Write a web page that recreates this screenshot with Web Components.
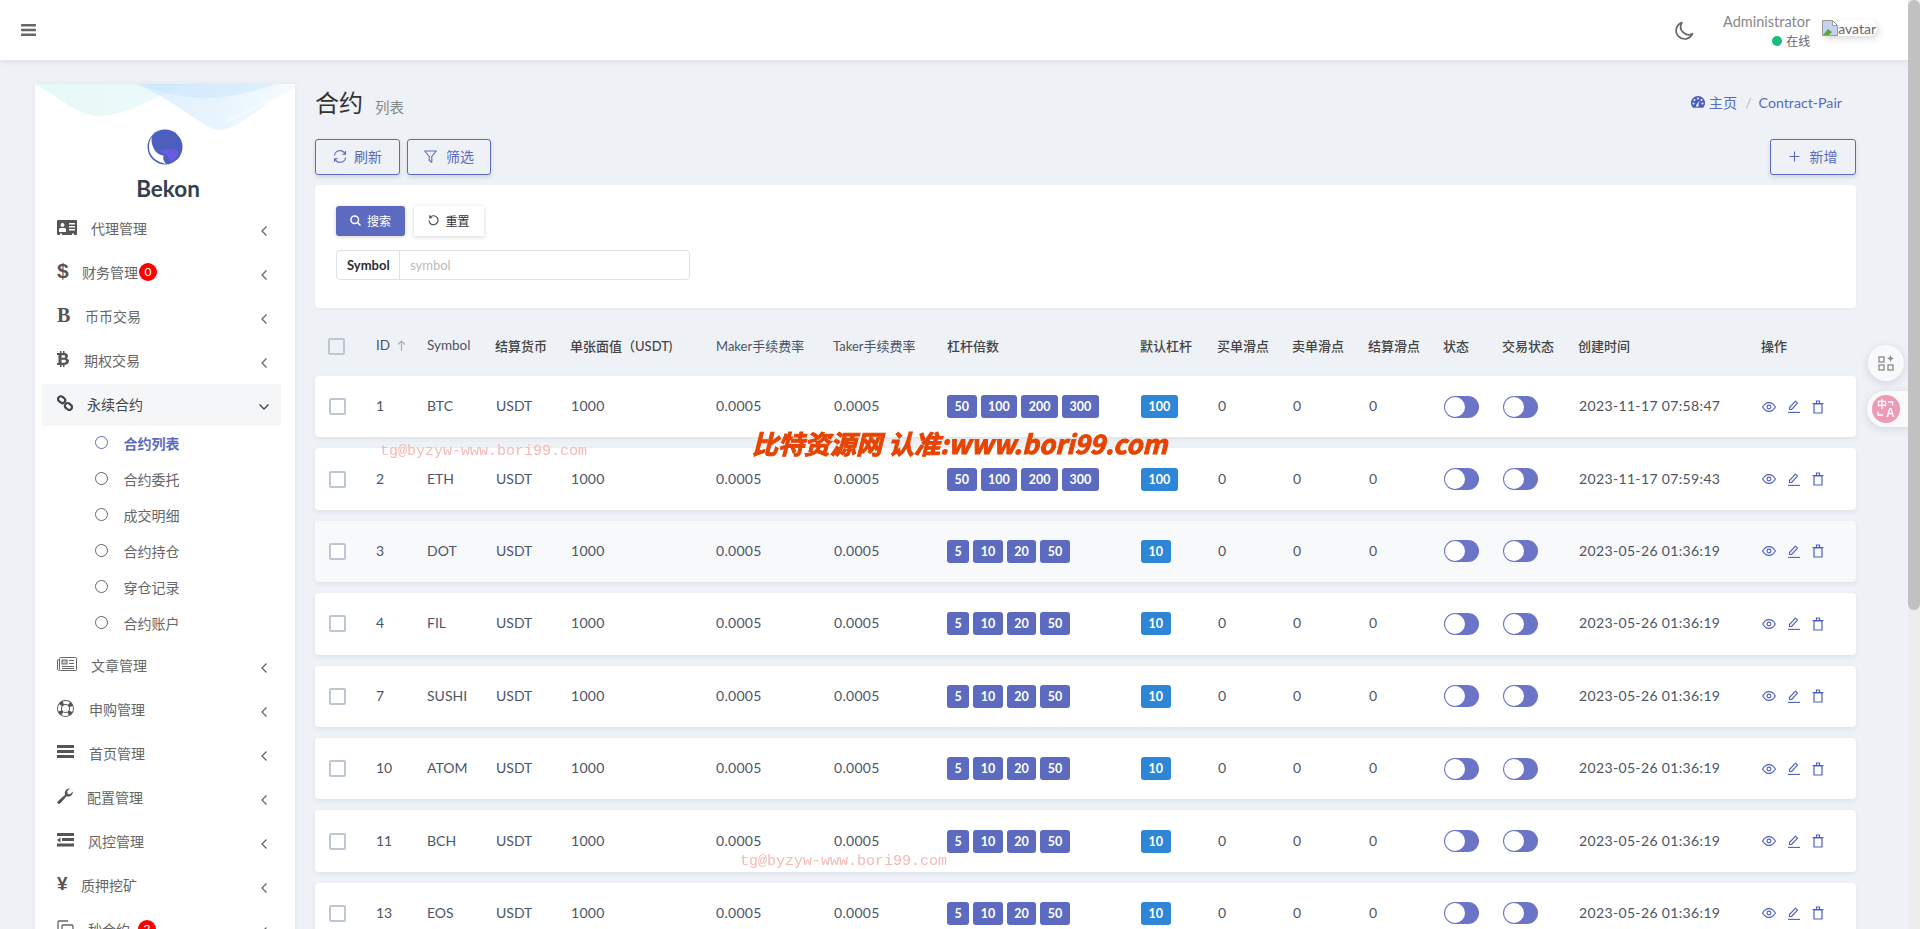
<!DOCTYPE html>
<html lang="zh">
<head>
<meta charset="utf-8">
<title>Contract-Pair</title>
<style>
  html, body {
    margin: 0;
    height: 929px;
    overflow: hidden;
    background: #eef1f6;
    font-family: "Lato", "Noto Sans CJK SC", sans-serif;
    font-size: 14px;
    color: #4c5566;
  }
  .main {
    display: flex;
    align-items: flex-start;
    padding-left: 35px;
    gap: 20px;
    height: 869px;
    overflow: hidden;
  }
  .content {
    width: 1541px;
    flex: none;
  }
  svg { display: block; }
</style>
</head>
<body>
<top-bar></top-bar>

<div class="main">
  <side-nav>
    <nav-item start="91"><svg slot="icon" width="20" height="15" viewBox="0 0 20 15"><path fill="#555" fill-rule="evenodd" d="M1 0h18a1 1 0 0 1 1 1v13a1 1 0 0 1-1 1h-2v-1.500h-2V15H5v-1.500H3V15H1a1 1 0 0 1-1-1V1a1 1 0 0 1 1-1zM5.500 3a2 2 0 1 0 0 4 2 2 0 0 0 0-4zM2 12h7V9.500C9 8.300 8 8 7 8H4C3 8 2 8.300 2 9.500zM12 3v1.500h6V3zm0 3v1.500h6V6zm0 3v1.500h6V9z"/></svg>代理管理</nav-item>
    <nav-item start="82" badge="0"><span slot="icon" class="g" style="font:bold 21px 'Liberation Sans',sans-serif;color:#555">$</span>财务管理</nav-item>
    <nav-item start="85"><span slot="icon" style="font:bold 20px 'Liberation Serif',serif;color:#555">B</span>币币交易</nav-item>
    <nav-item start="84"><svg slot="icon" width="12" height="16" viewBox="0 0 12 16"><path fill="#555" fill-rule="evenodd" d="M3 0h1.500v2H6V0h1.500v2.100C9.600 2.400 11 3.300 11 5c0 1.100-.6 1.900-1.500 2.300C11 7.700 12 8.700 12 10.300c0 2-1.700 3.300-4.500 3.600V16H6v-2H4.500v2H3v-2H0v-2h1.500V4H0V2h3zm1.500 4.300v2.500h2c1 0 1.700-.5 1.700-1.300s-.7-1.200-1.700-1.200zm0 4.400v3h2.500c1.200 0 2-.6 2-1.500s-.8-1.500-2-1.500z"/></svg>期权交易</nav-item>
    <nav-item start="87" active open><svg slot="icon" width="16" height="16" viewBox="0 0 16 16" fill="none" stroke="#444" stroke-width="2.200"><rect x=".9" y="1.900" width="7.500" height="5.500" rx="2.700" transform="rotate(40 4.600 4.600)"/><rect x="7.700" y="8.700" width="7.500" height="5.500" rx="2.700" transform="rotate(40 11.400 11.400)"/></svg>永续合约</nav-item>
    <nav-sub active style="margin-top:-2.500px">合约列表</nav-sub>
    <nav-sub>合约委托</nav-sub>
    <nav-sub>成交明细</nav-sub>
    <nav-sub>合约持仓</nav-sub>
    <nav-sub>穿仓记录</nav-sub>
    <nav-sub style="margin-bottom:3.700px">合约账户</nav-sub>
    <nav-item start="91"><svg slot="icon" width="20" height="14" viewBox="0 0 20 14" fill="none" stroke="#666"><rect x="2.500" y=".5" width="17" height="13" rx="1"/><path d="M2.500 3H1a.5.5 0 0 0-.5.5V12c0 1 1 1.500 2 1.500"/><rect x="5" y="3" width="5" height="4" fill="#666" fill-opacity=".35"/><path d="M12 3.500h5M12 6.500h5M5 9.500h12M5 11.500h12"/></svg>文章管理</nav-item>
    <nav-item start="89"><svg slot="icon" width="17" height="17" viewBox="0 0 17 17" fill="none" stroke="#555"><circle cx="8.500" cy="8.500" r="6" stroke-width="5" stroke="#555"/><circle cx="8.500" cy="8.500" r="6" stroke-width="3" stroke="#fff" stroke-dasharray="6 3.420" stroke-dashoffset="3"/></svg>申购管理</nav-item>
    <nav-item start="89"><svg slot="icon" width="17" height="14" viewBox="0 0 17 14" fill="#555"><rect width="17" height="3"/><rect y="5" width="17" height="3"/><rect y="10" width="17" height="3"/></svg>首页管理</nav-item>
    <nav-item start="87"><svg slot="icon" width="16" height="16" viewBox="0 0 16 16"><path fill="#555" d="M15.800 3.600c.2 2.500-1.800 5-4.500 5-.6 0-1.200-.1-1.700-.3l-6.200 6.900c-.8.900-2 .9-2.600.3s-.6-1.800.3-2.600l7-6.200c-.2-.5-.3-1-.3-1.600 0-2.700 2.500-4.800 5-4.500l-2.700 2.700.6 2.400 2.300.6z"/></svg>配置管理</nav-item>
    <nav-item start="88"><svg slot="icon" width="17" height="14" viewBox="0 0 17 14" fill="#555"><rect width="17" height="3"/><path d="M0 7l3.500-2.500v5z"/><rect x="5" y="5" width="12" height="3"/><rect y="10.500" width="17" height="3"/></svg>风控管理</nav-item>
    <nav-item start="81"><span slot="icon" style="font:bold 19px 'Liberation Sans',sans-serif;color:#555">¥</span>质押挖矿</nav-item>
    <nav-item start="88" badge="2"><svg slot="icon" width="17" height="17" viewBox="0 0 17 17" fill="none" stroke="#666" stroke-width="1.300"><path d="M11 1H2a1 1 0 0 0-1 1v11h4"/><rect x="5" y="5" width="11" height="11" rx="1"/></svg>秒合约</nav-item>
  </side-nav>

  <div class="content">
    <page-head></page-head>
    <search-panel></search-panel>
    <contract-table>
      <contract-row rid="1" symbol="BTC" levers="50,100,200,300" lever="100" created="2023-11-17 07:58:47"></contract-row>
      <contract-row rid="2" symbol="ETH" levers="50,100,200,300" lever="100" created="2023-11-17 07:59:43"></contract-row>
      <contract-row rid="3" symbol="DOT" levers="5,10,20,50" lever="10" created="2023-05-26 01:36:19" hover></contract-row>
      <contract-row rid="4" symbol="FIL" levers="5,10,20,50" lever="10" created="2023-05-26 01:36:19"></contract-row>
      <contract-row rid="7" symbol="SUSHI" levers="5,10,20,50" lever="10" created="2023-05-26 01:36:19"></contract-row>
      <contract-row rid="10" symbol="ATOM" levers="5,10,20,50" lever="10" created="2023-05-26 01:36:19"></contract-row>
      <contract-row rid="11" symbol="BCH" levers="5,10,20,50" lever="10" created="2023-05-26 01:36:19"></contract-row>
      <contract-row rid="13" symbol="EOS" levers="5,10,20,50" lever="10" created="2023-05-26 01:36:19"></contract-row>
    </contract-table>
  </div>
</div>

<float-tools></float-tools>
<water-marks></water-marks>
<fake-scrollbar></fake-scrollbar>

<script>
  // small helper, every element here is the same shape: styles + markup in an open root
  function define(name, html, extra) {
    const template = document.createElement("template");
    template.innerHTML = html;
    class El extends HTMLElement {
      constructor() {
        super();
        this.attachShadow({ mode: "open" });
        this.shadowRoot.appendChild(template.content.cloneNode(true));
      }
      connectedCallback() {
        if (extra) extra.call(this, this.shadowRoot);
      }
    }
    customElements.define(name, El);
  }

  define("top-bar", `
    <style>
      :host {
        display: flex;
        align-items: center;
        height: 60px;
        background: #fff;
        box-shadow: 0 1px 6px rgba(60, 70, 90, .12);
        position: relative;
        z-index: 2;
        padding: 0 43px 0 21px;
      }
      .menu { margin-right: auto; }
      .moon { margin-right: 29px; margin-top: 2px; }
      .who {
        text-align: right;
        color: #888;
        font-size: 14.500px;
        line-height: 17px;
        margin-right: 12px;
        padding-top: 2px;
      }
      .who div { white-space: nowrap; }
      .who .on {
        display: flex;
        justify-content: flex-end;
        align-items: center;
        gap: 4px;
        font-size: 12px;
        color: #666;
        margin-top: 3px;
      }
      .dot { width: 10px; height: 10px; border-radius: 50%; background: #19bd7a; }
      .avatar {
        display: flex;
        align-items: center;
        height: 16px;
        color: #666;
        font-size: 14px;
        background: #fff;
        border-radius: 0 8px 8px 0;
        box-shadow: 2px 3px 6px rgba(0, 0, 0, .14);
        margin-top: -4px;
        padding-right: 1px;
      }
    </style>
    <svg class="menu" width="15" height="12" viewBox="0 0 15 12" fill="#666"><rect width="15" height="2.400" rx=".6"/><rect y="4.800" width="15" height="2.400" rx=".6"/><rect y="9.600" width="15" height="2.400" rx=".6"/></svg>
    <svg class="moon" width="20" height="20" viewBox="0 0 19 19" fill="none" stroke="#666" stroke-width="1.600" stroke-linejoin="round"><path d="M7.500 1.500a8 8 0 1 0 10 10.500A7.500 7.500 0 0 1 7.500 1.500z"/></svg>
    <div class="who">
      <div>Administrator</div>
      <div class="on"><span class="dot"></span>在线</div>
    </div>
    <div class="avatar">
      <svg width="16" height="16" viewBox="0 0 16 16"><path fill="#c5d3ee" stroke="#999" d="M.5.500h10l5 5v10H.5z"/><path fill="#fff" stroke="#999" d="M10.500.500v5h5z"/><path fill="#5aa63c" d="M1 15l5-6 4 3-3 3z"/></svg>avatar
    </div>
  `);

  define("side-nav", `
    <style>
      :host {
        display: block;
        flex: none;
        width: 260px;
        height: 860px;
        margin-top: 24px;
        background: #fff;
        position: relative;
        box-shadow: 0 0 6px rgba(60, 70, 90, .06);
      }
      .wave { position: absolute; left: 0; top: 0; }
      .brand {
        display: flex;
        flex-direction: column;
        align-items: center;
        padding-top: 45px;
        height: 123px;
        box-sizing: border-box;
      }
      .name {
        font: 700 22.500px/26px "Lato", sans-serif;
        color: #333f4f;
        margin: 11px 0 0 6px;
      }
      .items { display: flex; flex-direction: column; padding: 0 14px 0 7px; }
    </style>
    <svg class="wave" width="260" height="47" viewBox="0 0 260 47">
      <defs>
        <linearGradient id="w1" x1="0" x2="1"><stop offset="0" stop-color="#e6f9f5"/><stop offset="1" stop-color="#edf9fc"/></linearGradient>
        <linearGradient id="w2" x1="0" x2="1"><stop offset="0" stop-color="#c9e5fb"/><stop offset=".6" stop-color="#dceffd"/><stop offset="1" stop-color="#f0f9fe"/></linearGradient>
      </defs>
      <path fill="url(#w1)" d="M0 0C25 14 45 32 62 32 90 32 115 16 150 0z"/>
      <path fill="url(#w2)" opacity=".6" d="M100 0C135 12 170 46 184 46 205 46 235 12 260 5V0z"/>
      <path fill="#bfe0fa" opacity=".4" d="M105 0C130 10 160 16 180 14S225 6 240 0z"/>
      <path fill="none" stroke="#fff" stroke-width="1" d="M190 38C210 30 230 16 250 12"/>
    </svg>
    <div class="brand">
      <svg width="36" height="36" viewBox="0 0 36 36">
        <defs><clipPath id="logo"><circle cx="18" cy="18" r="17.500"/></clipPath></defs>
        <circle cx="18" cy="18" r="17.500" fill="#4c5fbf"/>
        <g clip-path="url(#logo)">
          <path fill="#6a5ce0" d="M13 22.500C18 19 26 19 31 22 31 27 28 31 24 33 23 29 19 25 13 22.500z"/>
          <path fill="#fff" d="M4.700 7.700C1 14 1 22 5 27 8 31 12 33 19 35 17 32 15 29 17 27 13 26 9 24 7 20 5 16 4 12 4.700 7.700z"/>
        </g>
      </svg>
      <div class="name">Bekon</div>
    </div>
    <div class="items"><slot></slot></div>
  `);

  define("nav-item", `
    <style>
      :host {
        display: flex;
        align-items: center;
        height: 44px;
        position: relative;
        box-sizing: border-box;
        color: #666;
        font-size: 14px;
      }
      :host([active]) {
        height: 42px;
        margin: 1px 0;
        background: #f5f6f8;
        color: #444;
        border-radius: 2px;
      }
      .icon {
        flex: none;
        display: flex;
        align-items: center;
        height: 20px;
        margin-left: 15px;
        margin-top: -4px;
      }
      .label { white-space: nowrap; margin-top: -2px; }
      .badge {
        width: 18px;
        height: 18px;
        border-radius: 50%;
        background: #f00;
        color: #fff;
        font-size: 12px;
        line-height: 18px;
        text-align: center;
        margin-left: 1px;
        margin-top: -2px;
      }
      .arrow { position: absolute; right: 13px; top: 50%; margin-top: -4px; }
    </style>
    <span class="icon"><slot name="icon"></slot></span>
    <span class="label"><slot></slot></span>
    <span class="badge" hidden></span>
    <svg class="arrow" width="8" height="12" viewBox="0 0 8 12" fill="none" stroke="#666" stroke-width="1.300"><path d="M6.500 1.500L2 6l4.500 4.500"/></svg>
  `, function (root) {
    // the icon box runs up to where the text starts, text x differs per icon in the original
    const icon = root.querySelector(".icon");
    icon.style.width = (this.getAttribute("start") - 42 - 15) + "px";
    const badge = root.querySelector(".badge");
    if (this.hasAttribute("badge")) {
      badge.hidden = false;
      badge.textContent = this.getAttribute("badge");
      if (this.getAttribute("badge") === "2") badge.style.marginLeft = "8px";
    } else {
      badge.remove();
    }
    if (this.hasAttribute("open")) {
      const arrow = root.querySelector(".arrow");
      arrow.setAttribute("width", "12");
      arrow.setAttribute("height", "8");
      arrow.setAttribute("viewBox", "0 0 12 8");
      arrow.style.right = "11px";
      arrow.style.marginTop = "-2px";
      arrow.innerHTML = '<path d="M1.500 1.500L6 6l4.500-4.500"/>';
      arrow.setAttribute("stroke", "#444");
    }
  });

  define("nav-sub", `
    <style>
      :host {
        display: flex;
        align-items: center;
        height: 36px;
        color: #666;
        font-size: 14px;
        padding-left: 53px;
        gap: 15.500px;
      }
      :host([active]) { color: #5c6bc0; font-weight: 700; }
      i {
        display: block;
        width: 11px;
        height: 11px;
        border: 1.300px solid currentColor;
        border-radius: 50%;
      }
    </style>
    <i></i><span><slot></slot></span>
  `);

  define("tool-button", `
    <style>
      :host {
        display: inline-flex;
        align-items: center;
        justify-content: center;
        gap: 7px;
        box-sizing: border-box;
        height: 36px;
        padding-bottom: 2px;
        border: 1px solid #5c6bc0;
        border-radius: 3px;
        color: #5c6bc0;
        font-size: 14px;
        box-shadow: 0 2px 4px rgba(60, 70, 90, .16);
      }
    </style>
    <slot name="icon"></slot><slot></slot>
  `);

  define("page-head", `
    <style>
      :host { display: block; padding-top: 24px; }
      .top {
        display: flex;
        align-items: center;
        height: 40px;
        margin-top: -1px;
      }
      h1 { font-size: 24px; font-weight: 400; color: #333; margin: 0; line-height: 40px; }
      small { font-size: 14.500px; color: #888; margin-left: 12px; margin-top: 7px; }
      .crumb {
        margin-left: auto;
        display: flex;
        align-items: center;
        color: #5c6bc0;
        font-size: 14.200px;
        margin-right: 14px;
        margin-top: -2px;
      }
      .crumb .sl { color: #bbb; margin: 0 7px 0 8px; }
      .crumb svg { margin-right: 4px; }
      .tools { display: flex; gap: 7px; margin-top: 16px; }
      .tools .add { margin-left: auto; }
    </style>
    <div class="top">
      <h1>合约</h1><small>列表</small>
      <div class="crumb">
        <svg width="14" height="12" viewBox="0 0 14 12"><path fill="#4c5fbf" fill-rule="evenodd" d="M7 0a7 7 0 0 1 6 10.600l-.8 1.200H1.800L1 10.600A7 7 0 0 1 7 0zm0 1.500a1 1 0 1 0 0 2 1 1 0 0 0 0-2zM3.500 3a1 1 0 1 0 0 2 1 1 0 0 0 0-2zm7 0a1 1 0 1 0 0 2 1 1 0 0 0 0-2zM2.500 6.500a1 1 0 1 0 0 2 1 1 0 0 0 0-2zm9 0a1 1 0 1 0 0 2 1 1 0 0 0 0-2zM8.500 4.500L6 8.200a1.300 1.300 0 1 0 1.500.6z"/></svg>
        主页<span class="sl">/</span>Contract-Pair
      </div>
    </div>
    <div class="tools">
      <tool-button style="width:85px">
        <svg slot="icon" width="14" height="13" viewBox="0 0 14 13" fill="none" stroke="#5c6bc0" stroke-width="1.100"><path d="M1.500 5.500A5.500 5.500 0 0 1 12 4M12.500 7.500A5.500 5.500 0 0 1 2 9"/><path d="M12.500 1v3.300H9.200M1.500 12V8.700h3.300"/></svg>刷新
      </tool-button>
      <tool-button style="width:84px;gap:9px">
        <svg slot="icon" width="13" height="13" viewBox="0 0 13 13" fill="none" stroke="#5c6bc0" stroke-width="1.100" stroke-linejoin="round"><path d="M.7 1h11.600L7.800 6.500v5.800L5.200 10.500v-4z"/></svg>筛选
      </tool-button>
      <tool-button class="add" style="width:86px;gap:10px">
        <svg slot="icon" width="11" height="11" viewBox="0 0 11 11" stroke="#5c6bc0" stroke-width="1.100"><path d="M5.500 .5v10M.5 5.500h10"/></svg>新增
      </tool-button>
    </div>
  `);

  define("search-panel", `
    <style>
      :host {
        display: block;
        box-sizing: border-box;
        height: 123px;
        margin-top: 10px;
        padding: 21px;
        background: #fff;
        border-radius: 4px;
        box-shadow: 0 1px 3px rgba(60, 70, 90, .05);
      }
      .btns { display: flex; gap: 9px; }
      button {
        all: unset;
        display: flex;
        align-items: center;
        justify-content: center;
        gap: 6px;
        box-sizing: border-box;
        width: 69px;
        height: 30px;
        padding-bottom: 2px;
        font-size: 12px;
        border-radius: 3px;
        box-shadow: 0 1px 4px rgba(0, 0, 0, .18);
      }
      .go { background: #5c6bc0; color: #fff; }
      .clear { width: 70px; background: #fff; color: #333; border-radius: 1px; }
      .field {
        display: flex;
        align-items: center;
        box-sizing: border-box;
        width: 354px;
        height: 30px;
        margin-top: 14px;
        border: 1px solid #dde2e6;
        border-radius: 4px;
        font-size: 13px;
      }
      .field b {
        display: flex;
        align-items: center;
        height: 100%;
        padding: 0 8px 0 10px;
        width: 44px;
        color: #2b2f36;
        border-right: 1px solid #dde2e6;
      }
      .field span { padding-left: 10px; color: #bbb; }
    </style>
    <div class="btns">
      <button class="go"><svg width="11" height="11" viewBox="0 0 11 11" fill="none" stroke="#fff" stroke-width="1.500"><circle cx="4.700" cy="4.700" r="3.800"/><path d="M7.500 7.500l3 3"/></svg>搜索</button>
      <button class="clear"><svg width="11" height="11" viewBox="0 0 11 11" fill="none" stroke="#444" stroke-width="1.100"><path d="M2.200 2.200A4.500 4.500 0 1 1 1 5.500"/><path d="M1.800 .3v2.400h2.400"/></svg>重置</button>
    </div>
    <div class="field"><b>Symbol</b><span>symbol</span></div>
  `);

  // column widths are shared by the head and by each row through --cols
  define("contract-table", `
    <style>
      :host {
        display: block;
        --cols: 61px 51px 68px 75px 146px 117px 114px 193px 77px 75px 76px 75px 59px 76px 183px 95px;
      }
      .head {
        display: grid;
        grid-template-columns: var(--cols);
        align-items: center;
        height: 68px;
        padding-top: 6px;
        box-sizing: border-box;
        font-size: 13px;
        color: #444;
        font-weight: 500;
        white-space: nowrap;
      }
      .head .en { color: #4c5566; font-weight: 400; font-size: 13.500px; }
      .box {
        width: 17px;
        height: 17px;
        box-sizing: border-box;
        border: 2px solid #bcc7d3;
        border-radius: 2px;
        margin: 2px 0 0 13px;
      }
      .arrow { display: inline-block; vertical-align: -1px; margin-left: 7px; }
      .rows { display: flex; flex-direction: column; gap: 11px; }
    </style>
    <div class="head">
      <div class="box"></div>
      <div class="en">ID<svg class="arrow" width="9" height="11" viewBox="0 0 9 11" fill="none" stroke="#aab2bd" stroke-width="1.200"><path d="M4.500 11V1M1 4.500l3.500-3.500L8 4.500"/></svg></div>
      <div class="en">Symbol</div>
      <div>结算货币</div>
      <div>单张面值（USDT)</div>
      <div class="en" style="font-size:13px">Maker手续费率</div>
      <div class="en" style="font-size:13px">Taker手续费率</div>
      <div>杠杆倍数</div>
      <div>默认杠杆</div>
      <div>买单滑点</div>
      <div>卖单滑点</div>
      <div>结算滑点</div>
      <div>状态</div>
      <div>交易状态</div>
      <div>创建时间</div>
      <div>操作</div>
    </div>
    <div class="rows"><slot></slot></div>
  `);

  define("lever-tag", `
    <style>
      :host {
        display: inline-block;
        box-sizing: border-box;
        height: 23px;
        min-width: 22px;
        padding: 0 7.500px;
        border-radius: 3px;
        background: #5c6bc0;
        color: #fff;
        font-size: 12.500px;
        font-weight: 700;
        line-height: 23px;
        text-align: center;
      }
      :host([blue]) { background: #2e86d6; }
    </style>
    <slot></slot>
  `);

  define("toggle-switch", `
    <style>
      :host {
        display: block;
        box-sizing: border-box;
        width: 35px;
        height: 22px;
        margin-left: 1px;
        padding: 1px;
        background: #6a75c8;
        border-radius: 11px;
      }
      i {
        display: block;
        width: 20px;
        height: 20px;
        background: #fff;
        border-radius: 50%;
      }
    </style>
    <i></i>
  `);

  define("contract-row", `
    <style>
      :host {
        display: grid;
        grid-template-columns: var(--cols);
        align-items: center;
        height: 61.400px;
        background: #fff;
        border-radius: 4px;
        box-shadow: 0 2px 5px rgba(60, 70, 90, .08);
        font-size: 14px;
        color: #4c5566;
        white-space: nowrap;
      }
      :host([hover]) { background: #f8f9fb; }
      .box {
        width: 17px;
        height: 17px;
        box-sizing: border-box;
        border: 2px solid #bcc7d3;
        border-radius: 2px;
        background: #fff;
        margin-left: 14px;
      }
      .t { margin-top: -2px; }
      .pad { padding-left: 1px; }
      .num { letter-spacing: .3px; }
      .at { letter-spacing: .35px; }
      .tags { display: flex; gap: 4px; }
      .ops { display: flex; align-items: center; gap: 12px; padding-left: 1px; }
    </style>
    <div class="box"></div>
    <div class="t rid"></div>
    <div class="t sym"></div>
    <div class="t pad">USDT</div>
    <div class="t pad num">1000</div>
    <div class="t num">0.0005</div>
    <div class="t pad num">0.0005</div>
    <div class="tags"></div>
    <div class="pad"><lever-tag blue class="def"></lever-tag></div>
    <div class="t pad">0</div>
    <div class="t pad">0</div>
    <div class="t pad">0</div>
    <toggle-switch></toggle-switch>
    <toggle-switch></toggle-switch>
    <div class="t pad at"></div>
    <div class="ops">
      <svg width="14" height="10" viewBox="0 0 14 10" fill="none" stroke="#4d5fc4" stroke-width="1.100"><path d="M.6 5C2.300 2 4.500.6 7 .6S11.700 2 13.400 5C11.700 8 9.500 9.400 7 9.400S2.300 8 .6 5z"/><circle cx="7" cy="5" r="1.900"/></svg>
      <svg width="12" height="13" viewBox="0 0 12 13" fill="none" stroke="#4d5fc4" stroke-width="1.100" stroke-linejoin="round"><path d="M1.500 9.500v-2L7.500 1.200l2 2-6 6.300z"/><path d="M0 12.400h12"/></svg>
      <svg width="12" height="14" viewBox="0 0 12 14" fill="none" stroke="#4d5fc4" stroke-width="1.200"><path d="M2 4h8v9H2zM.5 3.500h11M4.500 3V1h3v2"/></svg>
    </div>
  `, function (root) {
    root.querySelector(".rid").textContent = this.getAttribute("rid");
    root.querySelector(".sym").textContent = this.getAttribute("symbol");
    root.querySelector(".at").textContent = this.getAttribute("created");
    root.querySelector(".def").textContent = this.getAttribute("lever");
    const tags = root.querySelector(".tags");
    this.getAttribute("levers").split(",").forEach((v) => {
      const tag = document.createElement("lever-tag");
      tag.textContent = v;
      tags.appendChild(tag);
    });
  });

  define("float-tools", `
    <style>
      :host {
        position: fixed;
        right: 12px;
        top: 345px;
        width: 41px;
        z-index: 5;
      }
      .one {
        width: 36px;
        height: 36px;
        margin-left: 1px;
        border-radius: 50%;
        background: #f8f9fb;
        box-shadow: 0 2px 8px rgba(60, 70, 90, .16);
        display: flex;
        align-items: center;
        justify-content: center;
      }
      .two {
        width: 41px;
        height: 36px;
        margin-top: 10px;
        border-radius: 18px 0 0 18px;
        background: #f8f9fb;
        box-shadow: 0 2px 8px rgba(60, 70, 90, .14);
        display: flex;
        align-items: center;
        padding-left: 5px;
        box-sizing: border-box;
      }
      .pink {
        width: 28px;
        height: 28px;
        border-radius: 50%;
        background: #ee9ab4;
        color: #fff;
        position: relative;
      }
      .pink span { position: absolute; left: 5px; top: 3px; font: 700 10px/11px "Noto Sans CJK SC", sans-serif; }
      .pink b { position: absolute; left: 14px; top: 13px; font: 700 12px/11px "Liberation Sans", sans-serif; }
      .pink svg { position: absolute; left: 0; top: 0; }
    </style>
    <div class="one">
      <svg width="16" height="16" viewBox="0 0 16 16" fill="none" stroke="#8a8a8a" stroke-width="1.300"><rect x="1" y="2" width="5" height="5"/><rect x="1" y="10" width="5" height="5"/><rect x="10" y="10" width="5" height="5"/><path fill="#8a8a8a" stroke="none" d="M12.500 0l1 2.500 2.500 1-2.500 1-1 2.500-1-2.500-2.500-1 2.500-1z"/></svg>
    </div>
    <div class="two"><div class="pink">
      <svg width="28" height="28" viewBox="0 0 28 28" fill="none" stroke="#fff" stroke-width="1.300"><path d="M16 7h4.500v3.500M6 16.500V20h5"/></svg>
      <span>中</span><b>A</b>
    </div></div>
  `);

  define("water-marks", `
    <style>
      :host { position: fixed; inset: 0; pointer-events: none; z-index: 4; }
      .big {
        position: absolute;
        left: 752px;
        top: 428px;
        font: italic 700 26px/30px "Noto Sans CJK SC", "DejaVu Sans", sans-serif;
        color: #e64400;
        -webkit-text-stroke: 1px #e64400;
        white-space: nowrap;
      }
      .tg {
        position: absolute;
        font: 15px/16px "Liberation Mono", monospace;
        color: #f6b9b4;
        white-space: nowrap;
      }
    </style>
    <div class="big">比特资源网 认准:www.bori99.com</div>
    <div class="tg" style="left:380px;top:444px">tg@byzyw-www.bori99.com</div>
    <div class="tg" style="left:740px;top:854px">tg@byzyw-www.bori99.com</div>
  `);

  define("fake-scrollbar", `
    <style>
      :host {
        position: fixed;
        right: 0;
        top: 0;
        bottom: 0;
        width: 12px;
        background: #ededed;
        z-index: 6;
      }
      i {
        display: block;
        height: 610px;
        background: #c1c1c1;
        border-radius: 6px;
      }
    </style>
    <i></i>
  `);
</script>
</body>
</html>
